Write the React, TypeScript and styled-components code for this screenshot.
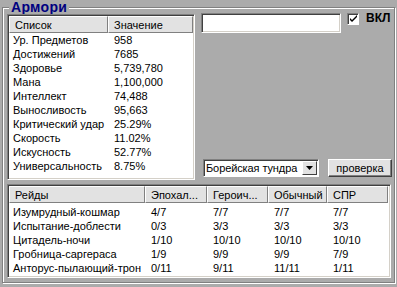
import React from "react";
import styled, { createGlobalStyle } from "styled-components";

const stats: [string, string][] = [
  ["Ур. Предметов", "958"],
  ["Достижений", "7685"],
  ["Здоровье", "5,739,780"],
  ["Мана", "1,100,000"],
  ["Интеллект", "74,488"],
  ["Выносливость", "95,663"],
  ["Критический удар", "25.29%"],
  ["Скорость", "11.02%"],
  ["Искусность", "52.77%"],
  ["Универсальность", "8.75%"],
];

const raidCols = ["Рейды", "Эпохал...", "Героич...", "Обычный", "СПР"];

const raids: string[][] = [
  ["Изумрудный-кошмар", "4/7", "7/7", "7/7", "7/7"],
  ["Испытание-доблести", "0/3", "3/3", "3/3", "3/3"],
  ["Цитадель-ночи", "1/10", "10/10", "10/10", "10/10"],
  ["Гробница-саргераса", "1/9", "9/9", "9/9", "7/9"],
  ["Анторус-пылающий-трон", "0/11", "9/11", "11/11", "1/11"],
];

const GlobalStyle = createGlobalStyle`
  html, body {
    margin: 0;
    padding: 0;
    background: #ababab;
  }
  body {
    font-family: "Liberation Sans", Arial, sans-serif;
    font-size: 11px;
    color: #000;
  }
  * {
    box-sizing: border-box;
  }
`;

function App() {
  return (
    <Page>
      <GlobalStyle />
      <Group>
        <Legend>Армори</Legend>
        <Body>
          <ListView $cols="99px 85px">
            <HeaderRow>
              <HeaderCell>Список</HeaderCell>
              <HeaderCell>Значение</HeaderCell>
            </HeaderRow>
            {stats.map(([name, value]) => (
              <Row key={name}>
                <Cell $first>{name}</Cell>
                <Cell>{value}</Cell>
              </Row>
            ))}
          </ListView>

          <Side>
            <TopLine>
              <TextBox type="text" />
              <CheckLabel>
                <CheckBox>
                  <svg width="9" height="9" viewBox="0 0 9 9">
                    <path d="M1 4 L3 6 L8 1 L8 3 L3 8 L1 6 Z" fill="#000" />
                  </svg>
                </CheckBox>
                ВКЛ
              </CheckLabel>
            </TopLine>
            <BottomLine>
              <Select>
                <SelectText>Борейская тундра</SelectText>
                <DropButton>
                  <svg width="7" height="4" viewBox="0 0 7 4">
                    <polygon points="0,0 7,0 3.5,4" fill="#000" />
                  </svg>
                </DropButton>
              </Select>
              <Button>проверка</Button>
            </BottomLine>
          </Side>

          <RaidList $cols="136px 62px 61px 59px 61px">
            <HeaderRow>
              {raidCols.map((c) => (
                <HeaderCell key={c}>{c}</HeaderCell>
              ))}
            </HeaderRow>
            <Rows>
              {raids.map((r) => (
                <Row key={r[0]}>
                  {r.map((v, i) => (
                    <Cell key={i} $first={i === 0}>
                      {v}
                    </Cell>
                  ))}
                </Row>
              ))}
            </Rows>
          </RaidList>
        </Body>
      </Group>
    </Page>
  );
}

const Page = styled.div`
  width: 397px;
  height: 287px;
  padding: 0 2px 4px 2px;
  background: #ababab;
  overflow: hidden;
`;

const Group = styled.fieldset`
  margin: 0;
  height: 283px;
  padding: 0 3px 2px 4px;
  border: 1px solid #808080;
  box-shadow: inset 1px 1px 0 #fff, 1px 1px 0 #fff;
  min-width: 0;
`;

const Legend = styled.legend`
  padding: 0 2px;
  margin-left: 2px;
  font-size: 14px;
  line-height: 14px;
  font-weight: bold;
  letter-spacing: 0.3px;
  color: #000080;
  background: #ababab;
`;

const Body = styled.div`
  display: grid;
  grid-template-columns: 188px 1fr;
  grid-template-rows: 166px 94px;
  column-gap: 6px;
  row-gap: 4px;
`;

const ListView = styled.div<{ $cols: string }>`
  --cols: ${({ $cols }) => $cols};
  background: #fff;
  border: 1px solid;
  border-color: #808080 #fff #fff #808080;
  box-shadow: inset 1px 1px 0 #404040, inset -1px -1px 0 #d4d0c8;
  padding: 1px;
  overflow: hidden;
`;

const RaidList = styled(ListView)`
  grid-column: 1 / -1;
`;

const HeaderRow = styled.div`
  display: grid;
  grid-template-columns: var(--cols);
  height: 17px;
`;

const HeaderCell = styled.div`
  background: #e2e2e2;
  border: 1px solid;
  border-color: #fff #808080 #808080 #fff;
  padding-left: 5px;
  line-height: 16px;
  white-space: nowrap;
  overflow: hidden;
`;

const Rows = styled.div`
  padding-top: 2px;
`;

const Row = styled.div`
  display: grid;
  grid-template-columns: var(--cols);
  height: 14px;
  line-height: 14px;
`;

const Cell = styled.div<{ $first?: boolean }>`
  padding-left: ${({ $first }) => ($first ? "4px" : "6px")};
  white-space: nowrap;
  overflow: hidden;
`;

const Side = styled.div`
  display: flex;
  flex-direction: column;
  justify-content: space-between;
  padding-bottom: 3px;
`;

const TopLine = styled.div`
  display: flex;
  align-items: flex-start;
  margin-top: -1px;
`;

const TextBox = styled.input`
  width: 140px;
  height: 20px;
  margin: 0;
  padding: 0 3px;
  background: #fff;
  border: 1px solid;
  border-color: #808080 #fff #fff #808080;
  box-shadow: inset 1px 1px 0 #404040, inset -1px -1px 0 #d4d0c8;
  outline: none;
  font: inherit;
`;

const CheckLabel = styled.label`
  display: flex;
  align-items: center;
  gap: 7px;
  margin-left: 6px;
  margin-top: -1px;
  font-size: 12px;
  font-weight: bold;
  line-height: 13px;
`;

const CheckBox = styled.span`
  display: flex;
  align-items: center;
  justify-content: center;
  width: 12px;
  height: 12px;
  background: #fff;
  border: 1px solid;
  border-color: #808080 #fff #fff #808080;
  box-shadow: inset 1px 1px 0 #404040;
`;

const BottomLine = styled.div`
  display: flex;
  align-items: center;
  justify-content: space-between;
  padding-left: 2px;
  margin-right: -1px;
`;

const Select = styled.div`
  display: flex;
  align-items: center;
  width: 116px;
  height: 18px;
  padding: 0 1px 0 2px;
  background: #fff;
  border: 1px solid;
  border-color: #808080 #fff #fff #808080;
  box-shadow: inset 1px 1px 0 #404040;
  white-space: nowrap;
`;

const SelectText = styled.span`
  flex: 1;
  overflow: hidden;
  letter-spacing: -0.1px;
`;

const DropButton = styled.span`
  display: flex;
  align-items: center;
  justify-content: center;
  flex: none;
  width: 15px;
  height: 14px;
  background: #e2e2e2;
  border: 1px solid;
  border-color: #fff #404040 #404040 #fff;
`;

const Button = styled.button`
  width: 64px;
  height: 18px;
  margin: 0;
  padding: 0;
  font: inherit;
  color: #000;
  background: #e2e2e2;
  border: 1px solid;
  border-color: #fff #404040 #404040 #fff;
  box-shadow: inset -1px -1px 0 #808080;
`;

export default App;
